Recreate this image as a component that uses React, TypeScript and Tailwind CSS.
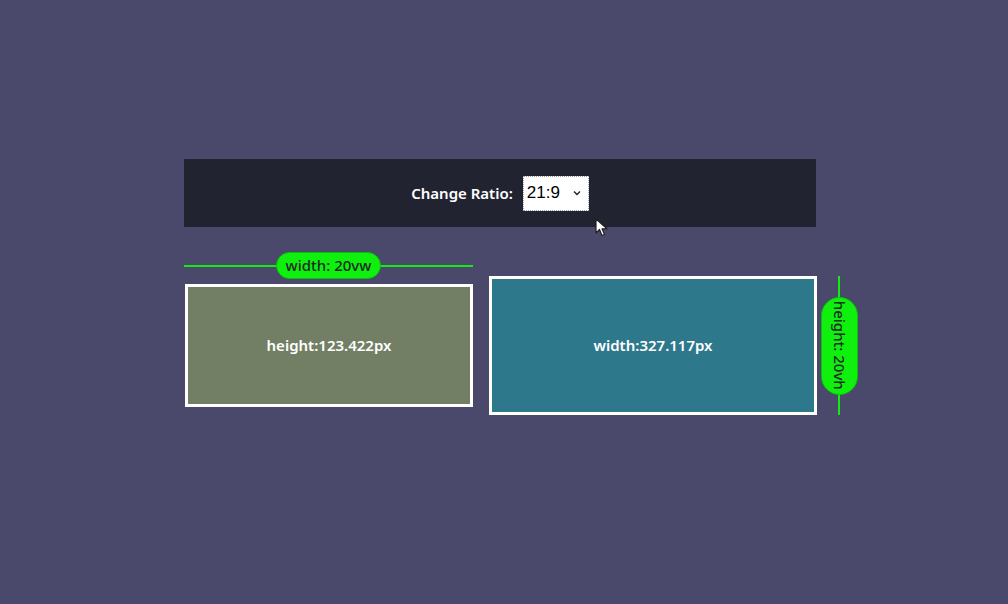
import React from 'react';

const font = { fontFamily: '"Noto Sans", "Open Sans", sans-serif' };

function Cursor() {
  return (
    <svg className="absolute left-[595px] top-[218px]" width="14" height="20" viewBox="0 0 14 20">
      <path d="M1 1 L1 15 L4.5 11.5 L7 17.5 L9.5 16.5 L7 10.8 L12 10.8 Z" fill="#fff" stroke="#222" strokeWidth="1.2" strokeLinejoin="round" />
    </svg>
  );
}

export default function App() {
  return (
    <div className="relative w-[1008px] h-[604px] bg-[#4a486b] pt-[159px] pl-[184px]" style={font}>
      {/* control bar */}
      <div className="w-[632px] h-[68px] bg-[#222331] flex items-center justify-center gap-[10px]">
        <span className="text-white text-[15px] font-semibold">Change Ratio:</span>
        <div className="w-[66px] h-[35px] bg-white border border-dotted border-gray-400 flex items-center justify-between pl-[3px] pr-[6px]">
          <span className="text-[17px] text-black" style={{ fontFamily: '"Liberation Sans", Arial, sans-serif' }}>21:9</span>
          <svg width="10" height="10" viewBox="0 0 10 10">
            <path d="M2 3.5 L5 6.5 L8 3.5" fill="none" stroke="#222" strokeWidth="1.4" />
          </svg>
        </div>
      </div>

      {/* boxes row */}
      <div className="flex items-start mt-[25px]">
        <div className="w-[289px] flex flex-col">
          <div className="relative h-[27px] flex items-center justify-center">
            <div className="absolute left-0 right-0 top-[13px] h-[2px] bg-[#10ee10]" />
            <div className="relative h-[27px] px-[9px] rounded-full bg-[#0ff00f] border border-[#0bbf0b] flex items-center text-[15px] font-medium text-[#1d2a22]">
              width: 20vw
            </div>
          </div>
          <div className="mt-[5px] ml-[1px] w-[288px] h-[123px] border-[3px] border-white bg-[#737f65] flex items-center justify-center text-white text-[15px] font-semibold">
            height:123.422px
          </div>
        </div>

        <div className="ml-[16px] mt-[24px] w-[328px] h-[139px] border-[3px] border-white bg-[#2e788b] flex items-center justify-center text-white text-[15px] font-semibold">
          width:327.117px
        </div>

        <div className="relative ml-[3px] mt-[24px] w-[38px] h-[139px] flex items-center justify-center">
          <div className="absolute top-0 bottom-0 left-[18px] w-[2px] bg-[#10ee10]" />
          <div className="relative w-[37px] h-[98px] rounded-full bg-[#0ff00f] border border-[#0bbf0b] flex items-center justify-center">
            <span className="rotate-90 whitespace-nowrap text-[15px] font-medium text-[#1d2a22]">height: 20vh</span>
          </div>
        </div>
      </div>

      <Cursor />
    </div>
  );
}
